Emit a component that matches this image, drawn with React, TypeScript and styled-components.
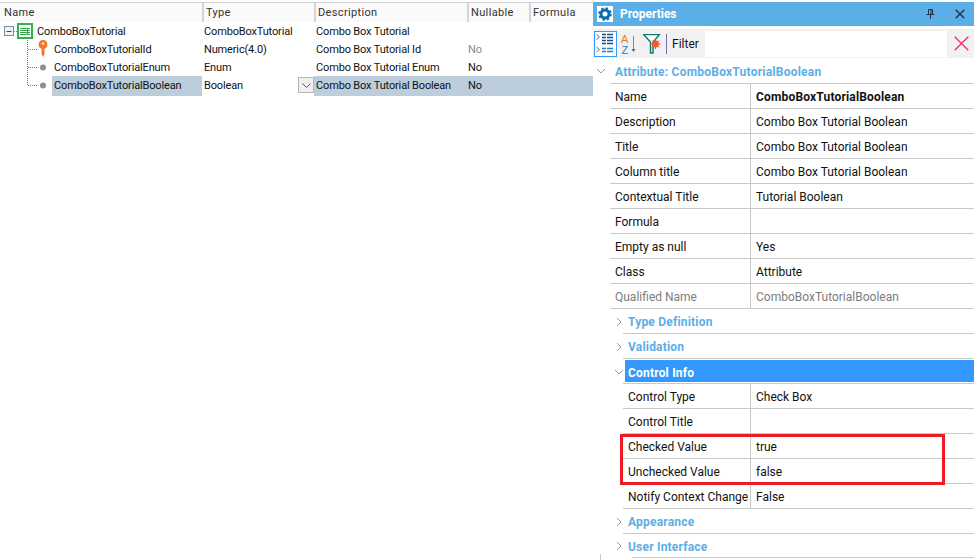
import styled, { createGlobalStyle } from "styled-components";

const GlobalStyle = createGlobalStyle`
  html, body {
    margin: 0;
    padding: 0;
    background: #fff;
    overflow: hidden;
  }
  body {
    font-family: Roboto, "Liberation Sans", sans-serif;
    font-size: 12px;
    color: #111;
  }
`;

const blue = "#5caee6";
const line = "#c9c9c9";

interface AttributeRow {
  name: string;
  type: string;
  description: string;
  nullable: string;
  kind: "table" | "key" | "attr";
  last?: boolean;
  muted?: boolean;
  selected?: boolean;
}

const attributes: AttributeRow[] = [
  { name: "ComboBoxTutorial", type: "ComboBoxTutorial", description: "Combo Box Tutorial", nullable: "", kind: "table" },
  { name: "ComboBoxTutorialId", type: "Numeric(4.0)", description: "Combo Box Tutorial Id", nullable: "No", kind: "key", muted: true },
  { name: "ComboBoxTutorialEnum", type: "Enum", description: "Combo Box Tutorial Enum", nullable: "No", kind: "attr" },
  { name: "ComboBoxTutorialBoolean", type: "Boolean", description: "Combo Box Tutorial Boolean", nullable: "No", kind: "attr", last: true, selected: true },
];

const mainProps = [
  { label: "Name", value: "ComboBoxTutorialBoolean", strong: true },
  { label: "Description", value: "Combo Box Tutorial Boolean" },
  { label: "Title", value: "Combo Box Tutorial Boolean" },
  { label: "Column title", value: "Combo Box Tutorial Boolean" },
  { label: "Contextual Title", value: "Tutorial Boolean" },
  { label: "Formula", value: "" },
  { label: "Empty as null", value: "Yes" },
  { label: "Class", value: "Attribute" },
  { label: "Qualified Name", value: "ComboBoxTutorialBoolean", muted: true },
];

const App = () => (
  <>
    <GlobalStyle />
    <Page>
      <LeftPane>
        <HeaderRow>
          <HeaderCell>Name</HeaderCell>
          <HeaderCell>Type</HeaderCell>
          <HeaderCell>Description</HeaderCell>
          <HeaderCell>Nullable</HeaderCell>
          <HeaderCell>Formula</HeaderCell>
        </HeaderRow>
        {attributes.map((row) => (
          <TreeRow key={row.name}>
            <NameCell>
              <TreeGlyph kind={row.kind} last={row.last} />
              <NameText $selected={row.selected}>{row.name}</NameText>
            </NameCell>
            <TypeCell>
              {row.type}
              {row.selected && (
                <ComboButton>
                  <svg width="9" height="5" viewBox="0 0 9 5">
                    <path d="M0.5 0.5 L4.5 4.5 L8.5 0.5" fill="none" stroke="#555" />
                  </svg>
                </ComboButton>
              )}
            </TypeCell>
            <DataCell $selected={row.selected}>{row.description}</DataCell>
            <NullCell $selected={row.selected} $muted={row.muted}>
              {row.nullable}
            </NullCell>
            <DataCell $selected={row.selected} />
          </TreeRow>
        ))}
      </LeftPane>

      <RightPane>
        <TitleBar>
          <GearBox>
            <svg width="14" height="14" viewBox="0 0 14 14">
              <circle cx="7" cy="7" r="4" fill="none" stroke="#0f6cb0" strokeWidth="3" />
              <circle cx="7" cy="7" r="5.6" fill="none" stroke="#0f6cb0" strokeWidth="2.4" strokeDasharray="2.2 2.2" />
            </svg>
          </GearBox>
          <TitleText>Properties</TitleText>
          <PinIcon />
          <CloseIcon />
        </TitleBar>

        <Toolbar>
          <ToolButton>
            <CategoryIcon />
          </ToolButton>
          <SortIcon />
          <FunnelIcon />
          <ToolSeparator />
          <FilterLabel>Filter</FilterLabel>
          <FilterInput />
          <ClearIcon />
        </Toolbar>

        <AttributeHeader>
          <Chevron open />
          <AttributeTitle>Attribute: ComboBoxTutorialBoolean</AttributeTitle>
        </AttributeHeader>

        <PropList>
          {mainProps.map((prop) => (
            <PropRow key={prop.label} $muted={prop.muted}>
              <PropLabel>{prop.label}</PropLabel>
              <PropValue $strong={prop.strong}>{prop.value}</PropValue>
            </PropRow>
          ))}
        </PropList>

        <Section title="Type Definition" />
        <Section title="Validation" />

        <ActiveSection>
          <Chevron open />
          <ActiveTitle>Control Info</ActiveTitle>
        </ActiveSection>
        <SubList>
          <SubRow>
            <SubLabel>Control Type</SubLabel>
            <PropValue>Check Box</PropValue>
          </SubRow>
          <SubRow>
            <SubLabel>Control Title</SubLabel>
            <PropValue />
          </SubRow>
          <SubRow>
            <SubLabel>Checked Value</SubLabel>
            <PropValue>true</PropValue>
          </SubRow>
          <SubRow>
            <SubLabel>Unchecked Value</SubLabel>
            <PropValue>false</PropValue>
          </SubRow>
          <SubRow>
            <SubLabel>Notify Context Change</SubLabel>
            <PropValue>False</PropValue>
          </SubRow>
          <Highlight />
        </SubList>

        <Section title="Appearance" />
        <Section title="User Interface" />
        <TailLine />
      </RightPane>
    </Page>
  </>
);

const TreeGlyph = ({ kind, last }: { kind: AttributeRow["kind"]; last?: boolean }) => {
  if (kind === "table") {
    return (
      <TableGlyph>
        <svg width="35" height="18" viewBox="0 0 35 18">
          <rect x="4.5" y="4.5" width="9" height="9" fill="#eef1f6" stroke="#7f8da0" />
          <path d="M6.5 9.5 H11.5" stroke="#2c4a78" />
          <path d="M14 9.5 H17" stroke="#888" strokeDasharray="1 1" />
          <rect x="18" y="2" width="14" height="14" fill="#fff" stroke="#35b34a" strokeWidth="2" />
          <path d="M20 6.5 H30 M20 8.5 H30 M20 10.5 H30 M20 12.5 H30" stroke="#35a34a" />
          <path d="M27.5 6 V13" stroke="#35a34a" />
        </svg>
      </TableGlyph>
    );
  }
  return (
    <GlyphBox>
      <svg width="52" height="18" viewBox="0 0 52 18">
        <path d={last ? "M27.5 0 V9" : "M27.5 0 V18"} stroke="#777" strokeDasharray="1 1" />
        <path d="M28 9.5 H37" stroke="#777" strokeDasharray="1 1" />
        {kind === "key" ? (
          <g fill="#f07a2c">
            <path d="M43 0 a4.5 4.5 0 0 1 1.5 8.7 V14 l-1.5 3 l-1.5 -3 V8.7 A4.5 4.5 0 0 1 43 0 Z" />
            <circle cx="43" cy="3.6" r="1.4" fill="#ffd9b8" />
          </g>
        ) : (
          <circle cx="43" cy="9.5" r="3" fill="#8e8e8e" />
        )}
      </svg>
    </GlyphBox>
  );
};

const PinIcon = () => (
  <PinBox width="9" height="10" viewBox="0 0 9 10">
    <path d="M2.5 0.5 H6.5 V5.5 H2.5 Z M5 0.5 V5.5 M0.5 5.5 H8.5 M4.5 5.5 V10" fill="none" stroke="#1f3550" />
  </PinBox>
);

const CloseIcon = () => (
  <CloseBox width="10" height="10" viewBox="0 0 10 10">
    <path d="M0.7 0.7 L9.3 9.3 M9.3 0.7 L0.7 9.3" stroke="#1f3550" strokeWidth="1.5" />
  </CloseBox>
);

const CategoryIcon = () => (
  <svg width="19" height="22" viewBox="0 0 19 22">
    <path d="M0.5 1.5 L3.5 4 L0.5 6.5 M0.5 14 L3.5 16.5 L0.5 19" fill="none" stroke="#777" />
    <path d="M6 1.5 H17 M6 4.5 H17 M6 7.5 H17 M6 10.5 H17" stroke="#14508c" strokeWidth="1.4" />
    <path d="M6 15.5 H17 M6 18.5 H17" stroke="#2a80c8" strokeWidth="1.4" />
    <path d="M10.5 0 V12 M10.5 14 V20" stroke="#fbfdff" />
  </svg>
);

const SortIcon = () => (
  <SortBox width="16" height="22" viewBox="0 0 16 22">
    <text x="0" y="10" fontSize="11" fontFamily="Liberation Sans" fill="#e8782a">A</text>
    <text x="0.5" y="21" fontSize="11" fontFamily="Liberation Sans" fill="#2a80c8">Z</text>
    <path d="M12.5 3 V18" stroke="#888" />
    <path d="M10.5 16 H14.5 L12.5 19 Z" fill="#666" />
  </SortBox>
);

const FunnelIcon = () => (
  <FunnelBox width="18" height="20" viewBox="0 0 18 20">
    <path d="M0.5 0.5 H16.5 L10 8 V19 H7.5 V8 Z" fill="#fff" stroke="#197a72" strokeWidth="1.5" />
    <circle cx="12.5" cy="10" r="3.4" fill="#ef5a28" />
    <path d="M12.5 5 V15 M7.5 10 H17.5 M9 6.5 L16 13.5 M16 6.5 L9 13.5" stroke="#ef5a28" />
  </FunnelBox>
);

const ClearIcon = () => (
  <ClearBox width="15" height="15" viewBox="0 0 15 15">
    <path d="M0.7 0.7 L14.3 14.3 M14.3 0.7 L0.7 14.3" stroke="#e8305f" strokeWidth="1.3" />
  </ClearBox>
);

const Chevron = ({ open }: { open?: boolean }) => (
  <ChevronBox width="9" height="10" viewBox="0 0 9 10">
    <path d={open ? "M1 3 L5 7 L9 3" : "M3 1 L7 5 L3 9"} fill="none" stroke="#9a9a9a" />
  </ChevronBox>
);

const Section = ({ title }: { title: string }) => (
  <SectionRow>
    <Chevron />
    <SectionTitle>{title}</SectionTitle>
  </SectionRow>
);

const Page = styled.div`
  display: flex;
  width: 974px;
  height: 560px;
  overflow: hidden;
`;

const LeftPane = styled.div`
  width: 593px;
  flex: none;
  padding-top: 2px;
  font-size: 11px;
  letter-spacing: -0.15px;
`;

const columns = "202px 112px 153px 62px 64px";

const HeaderRow = styled.div`
  display: grid;
  grid-template-columns: ${columns};
  height: 20px;
  border-top: 1px solid #d0d0d0;
  box-sizing: border-box;
  background: #fafafa;
`;

const HeaderCell = styled.div`
  padding-left: 4px;
  line-height: 19px;
  color: #333;
  letter-spacing: 0.35px;
  box-sizing: border-box;

  & + & {
    padding-left: 2px;
    border-left: 2px solid #d4d4d4;
  }
`;

const TreeRow = styled.div`
  display: grid;
  grid-template-columns: ${columns};
  height: 18px;
  line-height: 20px;
`;

const NameCell = styled.div`
  display: flex;
  align-items: stretch;
`;

const GlyphBox = styled.div`
  width: 52px;
  height: 18px;
  flex: none;
`;

const TableGlyph = styled(GlyphBox)`
  width: 35px;
`;

const NameText = styled.div<{ $selected?: boolean }>`
  flex: 1;
  padding-left: 2px;
  background: ${({ $selected }) => ($selected ? "#bccddc" : "transparent")};
`;

const TypeCell = styled.div`
  position: relative;
  padding-left: 2px;
`;

const ComboButton = styled.div`
  position: absolute;
  right: 0;
  top: 1px;
  width: 16px;
  height: 16px;
  display: flex;
  align-items: center;
  justify-content: center;
  background: #f0f0f0;
  border: 1px solid #b4b4b4;
  box-sizing: border-box;
`;

const DataCell = styled.div<{ $selected?: boolean }>`
  padding-left: 2px;
  white-space: nowrap;
  background: ${({ $selected }) => ($selected ? "#bccddc" : "transparent")};
`;

const NullCell = styled(DataCell)<{ $muted?: boolean }>`
  padding-left: 1px;
  color: ${({ $muted }) => ($muted ? "#8a8a8a" : "#111")};
`;

const RightPane = styled.div`
  width: 381px;
  flex: none;
  padding-top: 2px;
`;

const TitleBar = styled.div`
  display: flex;
  align-items: center;
  height: 24px;
  background: ${blue};
  padding: 0 9px 0 4px;
`;

const GearBox = styled.div`
  width: 16px;
  height: 16px;
  background: #fff;
  display: flex;
  align-items: center;
  justify-content: center;
`;

const TitleText = styled.div`
  flex: 1;
  margin-left: 7px;
  color: #fff;
  font-weight: 700;
`;

const PinBox = styled.svg`
  margin-right: 20px;
`;

const CloseBox = styled.svg``;

const Toolbar = styled.div`
  display: flex;
  align-items: center;
  height: 29px;
  margin-top: 3px;
  padding-left: 1px;
  background: #f1f1f1;
`;

const ToolButton = styled.div`
  width: 23px;
  height: 26px;
  border: 1px solid #3399ff;
  box-sizing: border-box;
  display: flex;
  align-items: center;
  justify-content: center;
  background: #fbfdff;
`;

const SortBox = styled.svg`
  margin-left: 4px;
`;

const FunnelBox = styled.svg`
  margin-left: 6px;
`;

const ToolSeparator = styled.div`
  width: 1px;
  height: 20px;
  margin-left: 5px;
  background: #7a70a8;
`;

const FilterLabel = styled.div`
  margin-left: 5px;
  width: 33px;
`;

const FilterInput = styled.div`
  width: 242px;
  height: 26px;
  background: #fff;
`;

const ClearBox = styled.svg`
  margin-left: 7px;
`;

const AttributeHeader = styled.div`
  display: flex;
  align-items: center;
  height: 24px;
  margin-top: 1px;
  padding-left: 3px;
`;

const ChevronBox = styled.svg`
  flex: none;
`;

const AttributeTitle = styled.div`
  margin-left: 10px;
  padding-top: 2px;
  color: ${blue};
  font-weight: 700;
  letter-spacing: 0.23px;
`;

const PropList = styled.div`
  margin-left: 17px;
  border-top: 1px solid ${line};
`;

const PropRow = styled.div<{ $muted?: boolean }>`
  display: grid;
  grid-template-columns: 141px 1fr;
  height: 25px;
  line-height: 27px;
  box-sizing: border-box;
  border-bottom: 1px solid ${line};
  color: ${({ $muted }) => ($muted ? "#7d7d7d" : "#111")};
`;

const PropLabel = styled.div`
  padding-left: 5px;
  border-right: 1px solid ${line};
  white-space: nowrap;
  overflow: hidden;
  height: 24px;
`;

const PropValue = styled.div<{ $strong?: boolean }>`
  padding-left: 5px;
  font-weight: ${({ $strong }) => ($strong ? 700 : 400)};
  letter-spacing: ${({ $strong }) => ($strong ? "0.17px" : "0")};
`;

const SectionRow = styled.div`
  display: flex;
  align-items: center;
  margin-left: 21px;
  height: 25px;

  &:nth-last-child(2) {
    height: 23px;
  }
`;

const SectionTitle = styled.div`
  flex: 1;
  height: 25px;
  line-height: 27px;
  padding-left: 5px;
  box-sizing: border-box;
  border-bottom: 1px solid ${line};
  color: ${blue};
  font-weight: 700;
  letter-spacing: 0.2px;

  ${SectionRow}:nth-last-child(2) & {
    height: 23px;
    line-height: 27px;
    border-bottom: none;
  }
`;

const TailLine = styled.div`
  position: relative;
  height: 1px;
  margin-left: 39px;
  background: ${line};

  &::before {
    content: "";
    position: absolute;
    left: -32px;
    top: -3px;
    width: 1px;
    height: 8px;
    background: ${line};
  }
`;

const ActiveSection = styled.div`
  display: flex;
  align-items: flex-start;
  height: 24px;
  padding-top: 1px;
  padding-left: 21px;
  box-sizing: border-box;

  ${ChevronBox} {
    margin-top: 7px;
  }
`;

const ActiveTitle = styled.div`
  flex: 1;
  height: 22px;
  line-height: 26px;
  margin-left: 2px;
  padding-left: 3px;
  background: #3399ff;
  color: #fff;
  font-weight: 700;
  letter-spacing: 0.2px;
`;

const SubList = styled.div`
  position: relative;
  margin-left: 30px;
  border-top: 1px solid ${line};
`;

const SubRow = styled.div`
  display: grid;
  grid-template-columns: 128px 1fr;
  height: 25px;
  line-height: 27px;
  box-sizing: border-box;
  border-bottom: 1px solid ${line};
`;

const SubLabel = styled.div`
  padding-left: 5px;
  border-right: 1px solid ${line};
  white-space: nowrap;
  overflow: hidden;
  height: 24px;
`;

const Highlight = styled.div`
  position: absolute;
  left: -3px;
  top: 50px;
  width: 325px;
  height: 51px;
  box-sizing: border-box;
  border: 3px solid #ed1c24;
`;

export default App;
